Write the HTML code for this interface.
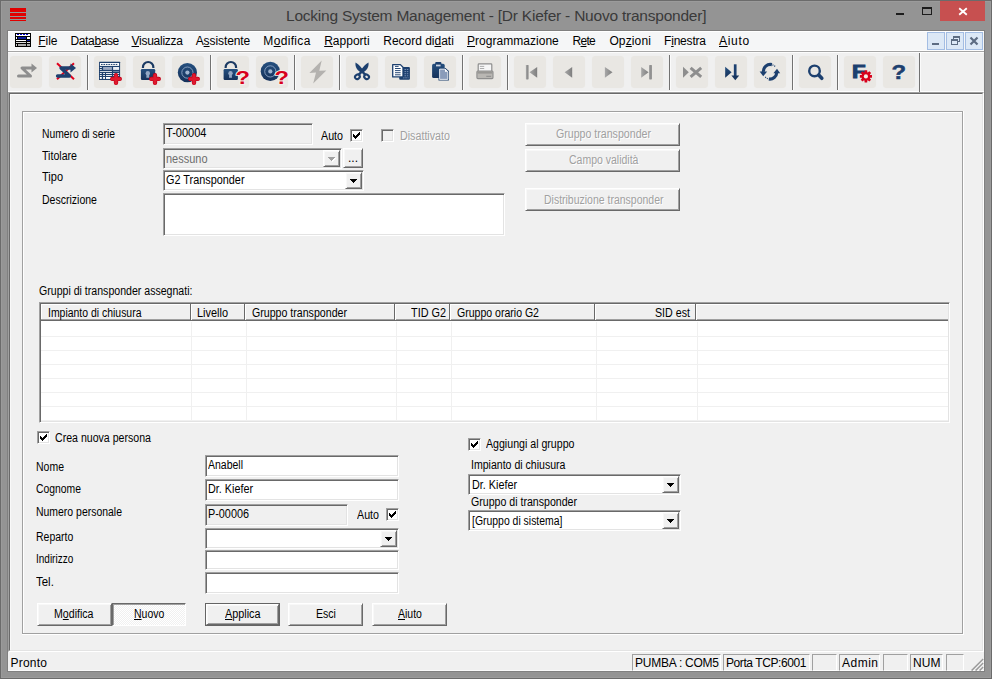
<!DOCTYPE html>
<html><head><meta charset="utf-8"><title>Locking System Management</title>
<style>
html,body{margin:0;padding:0;}
body{width:992px;height:679px;background:#949494;position:relative;overflow:hidden;font-family:"Liberation Sans",sans-serif;}
div,span,svg{position:absolute;box-sizing:border-box;}
.t{white-space:nowrap;color:#000;}
.f{font-size:12px;line-height:14px;height:14px;transform-origin:0 0;}
.g{font-size:12px;line-height:14px;height:14px;transform-origin:0 0;color:#a0a0a0;text-shadow:1px 1px 0 #fff;}
.m{font-size:12px;line-height:15px;height:15px;}
.s{font-size:12px;line-height:15px;height:15px;}
.tt{font-size:15.5px;line-height:19px;height:19px;color:#3a3a3a;}
u{text-decoration:underline;text-underline-offset:1px;text-decoration-thickness:1px;}
.sunk{border:1px solid;border-color:#a0a0a0 #fff #fff #a0a0a0;box-shadow:inset 1px 1px 0 #696969,inset -1px -1px 0 #e3e3e3;background:#fff;}
.dis{background:#f0f0f0;}
.btn{border:1px solid;border-color:#fff #696969 #696969 #fff;box-shadow:inset 1px 1px 0 #f8f8f8,inset -1px -1px 0 #a0a0a0;background:#f0f0f0;}
.cb{width:13px;height:13px;border:1px solid;border-color:#a0a0a0 #fff #fff #a0a0a0;box-shadow:inset 1px 1px 0 #696969,inset -1px -1px 0 #e3e3e3;background:#fff;}
.tb{width:32px;height:32px;top:56px;background:#e9e7e3;border-radius:4px;box-shadow:0 0 1px #e9e7e3;}
.tsep{width:2px;top:55px;height:35px;border-left:1px solid #727272;border-right:1px solid #fbfbfb;}
.hsep{top:304px;height:16px;width:2px;border-left:1px solid #696969;border-right:1px solid #fff;}
.gl{background:#f0f0f0;}
</style></head><body>

<div style="left:0;top:0;width:992px;height:679px;border:1px solid #6b6b6b;box-shadow:inset 0 0 0 1px #9b9b9b;"></div>
<div style="left:7px;top:30px;width:978px;height:642px;border:1px solid #808080;"></div>
<div style="left:10px;top:8px;width:16px;height:4px;background:#e10000;"></div>
<div style="left:10px;top:13px;width:16px;height:3px;background:#e10000;"></div>
<div style="left:10px;top:17px;width:16px;height:2px;background:#e10000;"></div>
<div style="left:10px;top:20px;width:16px;height:1px;background:#e10000;"></div>
<span id="t1" class="t tt" style="left:286px;top:6px;letter-spacing:-0.221px;">Locking System Management - [Dr Kiefer - Nuovo transponder]</span>
<div style="left:896px;top:13px;width:8px;height:2px;background:#1c1c1c;"></div>
<div style="left:922px;top:7px;width:10px;height:8px;border:1px solid #1c1c1c;border-top-width:2px;"></div>
<div style="left:940px;top:1px;width:45px;height:20px;background:#c75050;"></div>
<svg style="left:958px;top:7px" width="10" height="9" viewBox="0 0 10 9"><path d="M1.2 1.2 L8.8 7.8 M8.8 1.2 L1.2 7.8" stroke="#fff" stroke-width="1.8" fill="none"/></svg>
<div style="left:8px;top:31px;width:976px;height:20px;background:#f5f6f7;border-top:1px solid #fff;"></div>
<div style="left:8px;top:50px;width:976px;height:1px;background:#fdfdfd;"></div>
<svg style="left:15px;top:33px" width="16" height="14" viewBox="0 0 16 14" shape-rendering="crispEdges">
<rect x="0" y="0" width="16" height="14" fill="#000"/>
<rect x="1" y="1" width="14" height="2" fill="#fff"/>
<rect x="2" y="1" width="2" height="1" fill="#00c"/><rect x="5" y="1" width="2" height="1" fill="#00c"/><rect x="8" y="1" width="2" height="1" fill="#00c"/><rect x="11" y="1" width="2" height="1" fill="#00c"/>
<rect x="1" y="4" width="1" height="2" fill="#fff"/><rect x="3" y="4" width="8" height="2" fill="#0a1a9a"/><rect x="12" y="4" width="3" height="2" fill="#fff"/>
<rect x="1" y="7" width="10" height="1" fill="#fff"/><rect x="12" y="7" width="3" height="1" fill="#0a1a9a"/>
<rect x="1" y="9" width="10" height="1" fill="#ddd"/><rect x="12" y="9" width="3" height="1" fill="#ddd"/>
<rect x="1" y="11" width="1" height="2" fill="#ccc"/><rect x="3" y="11" width="8" height="2" fill="#aaa"/><rect x="12" y="11" width="3" height="2" fill="#aaa"/>
</svg>
<span id="t2" class="t m" style="left:38.3px;top:34px;letter-spacing:-0.085px;"><u>F</u>ile</span>
<span id="t3" class="t m" style="left:70.5px;top:34px;letter-spacing:-0.371px;">Data<u>b</u>ase</span>
<span id="t4" class="t m" style="left:131.5px;top:34px;letter-spacing:-0.258px;"><u>V</u>isualizza</span>
<span id="t5" class="t m" style="left:195.7px;top:34px;letter-spacing:-0.087px;">A<u>s</u>sistente</span>
<span id="t6" class="t m" style="left:263.3px;top:34px;letter-spacing:0.340px;">M<u>o</u>difica</span>
<span id="t7" class="t m" style="left:324.2px;top:34px;letter-spacing:0.004px;"><u>R</u>apporti</span>
<span id="t8" class="t m" style="left:383.3px;top:34px;letter-spacing:-0.018px;">Record di<u>d</u>ati</span>
<span id="t9" class="t m" style="left:467px;top:34px;letter-spacing:0.031px;"><u>P</u>rogrammazione</span>
<span id="t10" class="t m" style="left:572.6px;top:34px;letter-spacing:-0.723px;">R<u>e</u>te</span>
<span id="t11" class="t m" style="left:609.4px;top:34px;letter-spacing:0.130px;">Op<u>z</u>ioni</span>
<span id="t12" class="t m" style="left:664px;top:34px;letter-spacing:-0.197px;">F<u>i</u>nestra</span>
<span id="t13" class="t m" style="left:719px;top:34px;letter-spacing:0.710px;"><u>A</u>iuto</span>
<div style="left:927px;top:32px;width:18px;height:18px;border:1px solid #a3bde3;background:#dce8f6;"></div>
<div style="left:946px;top:32px;width:18px;height:18px;border:1px solid #a3bde3;background:#dce8f6;"></div>
<div style="left:965px;top:32px;width:18px;height:18px;border:1px solid #a3bde3;background:#dce8f6;"></div>
<div style="left:932px;top:43px;width:7px;height:2px;background:#5d6c82;"></div>
<svg style="left:950px;top:35px" width="11" height="11" viewBox="0 0 11 11" shape-rendering="crispEdges">
<rect x="3" y="1" width="7" height="2" fill="#5d6c82"/><rect x="9" y="1" width="1" height="6" fill="#5d6c82"/><rect x="8" y="6" width="2" height="1" fill="#5d6c82"/><rect x="3" y="1" width="1" height="3" fill="#5d6c82"/>
<rect x="1" y="4" width="7" height="2" fill="#5d6c82"/><rect x="1" y="4" width="1" height="6" fill="#5d6c82"/><rect x="7" y="4" width="1" height="6" fill="#5d6c82"/><rect x="1" y="9" width="7" height="1" fill="#5d6c82"/>
</svg>
<svg style="left:969px;top:36px" width="10" height="10" viewBox="0 0 10 10"><path d="M1.5 1.5 L8.5 8.5 M8.5 1.5 L1.5 8.5" stroke="#5d6c82" stroke-width="2.2" fill="none"/></svg>
<div style="left:8px;top:51px;width:976px;height:41px;background:#f0f0f0;"></div>
<div style="left:8px;top:51px;width:976px;height:1px;background:#a6a6a6;"></div>
<div style="left:8px;top:91px;width:976px;height:1px;background:#fff;"></div>
<div style="left:8px;top:52px;width:976px;height:1px;background:#fcfcfc;"></div>
<svg style="left:0;top:0" width="0" height="0"><defs>
<linearGradient id="gb" x1="0" y1="0" x2="0" y2="1"><stop offset="0" stop-color="#26507f"/><stop offset="1" stop-color="#15315a"/></linearGradient>
<linearGradient id="gg" x1="0" y1="0" x2="1" y2="0"><stop offset="0" stop-color="#a8a8a8"/><stop offset="1" stop-color="#7e7e7e"/></linearGradient>
<linearGradient id="gr" x1="0" y1="0" x2="0" y2="1"><stop offset="0" stop-color="#ee2a3a"/><stop offset="1" stop-color="#b80014"/></linearGradient>
</defs></svg>
<div class="tb" style="left:10px;"></div>
<svg style="left:10px;top:56px" width="32" height="32" viewBox="0 0 32 32"><path d="M8.5 20 H20.5 L12 12 H23" stroke="#8e8e8e" stroke-width="3" fill="none" stroke-linecap="round" stroke-linejoin="round"/><path d="M21.5 7.5 L27 12 L21.5 16.5z" fill="#8e8e8e"/></svg>
<div class="tb" style="left:49px;"></div>
<svg style="left:49px;top:56px" width="32" height="32" viewBox="0 0 32 32"><path d="M8 7.3 L25 23.3 M25 7.3 L8 23.3" stroke="#e0001c" stroke-width="2"/><path d="M8.5 20 H20.5 L12 12 H23" stroke="#1d406f" stroke-width="3.3" fill="none" stroke-linecap="round" stroke-linejoin="round"/><path d="M21.5 7.5 L27 12 L21.5 16.5z" fill="#1d406f"/></svg>
<div class="tb" style="left:94px;"></div>
<svg style="left:94px;top:56px" width="32" height="32" viewBox="0 0 32 32"><rect x="5" y="5.8" width="21.1" height="18.2" rx="0.5" fill="#1d3f6c"/><rect x="5.9" y="7" width="19.2" height="2.9" fill="#fff"/><rect x="5.9" y="11" width="1.9" height="0.9" fill="#fff"/><rect x="5.9" y="13.1" width="1.9" height="0.8" fill="#fff"/><rect x="9.1" y="11" width="8.8" height="2.9" fill="#9aa7c0"/><rect x="19.1" y="11" width="6.0" height="2.9" fill="#e9edf3"/><rect x="5.9" y="15.1" width="12.0" height="0.8" fill="#fff"/><rect x="19.1" y="15.1" width="6.0" height="0.8" fill="#7f93b2"/><rect x="5.9" y="17.1" width="1.9" height="0.9" fill="#fff"/><rect x="9.1" y="17.1" width="1.9" height="0.9" fill="#fff"/><rect x="12" y="17.1" width="5.9" height="0.9" fill="#fff"/><rect x="19.1" y="17.1" width="6.0" height="0.9" fill="#fff"/><rect x="5.9" y="19.1" width="1.9" height="0.9" fill="#fff"/><rect x="9.1" y="19.1" width="1.9" height="0.9" fill="#fff"/><rect x="12" y="19.1" width="5.9" height="0.9" fill="#fff"/><rect x="19.1" y="19.1" width="6.0" height="0.9" fill="#fff"/><rect x="5.9" y="21" width="1.9" height="1.9" fill="#fff"/><rect x="9.1" y="21" width="1.9" height="1.9" fill="#fff"/><rect x="12" y="21" width="5.9" height="1.9" fill="#fff"/><rect x="19.1" y="21" width="6.0" height="1.9" fill="#fff"/><path d="M7 8.45h17" stroke="#1d3f6c" stroke-width="1" stroke-dasharray="1.6 0.85"/><path d="M22 19.2V26.9M18.2 22.95H25.8" stroke="#bd0019" stroke-width="4.3" stroke-linecap="round"/><path d="M22 19.2V26.9M18.2 22.95H25.8" stroke="#e01a2e" stroke-width="3.1" stroke-linecap="round"/></svg>
<div class="tb" style="left:133px;"></div>
<svg style="left:133px;top:56px" width="32" height="32" viewBox="0 0 32 32"><path d="M9.95 12.1 V11.3 A5.2 5.3 0 0 1 20.35 11.3 V12.1" stroke="#1b3a63" stroke-width="2.2" fill="none"/><rect x="7.9" y="13.1" width="14.3" height="10.9" rx="1.2" fill="url(#gb)"/><circle cx="14.8" cy="17.2" r="2.2" fill="#93a7c4"/><path d="M13.6 17.5 h2.4 l0.3 4.2 h-3z" fill="#93a7c4"/><path d="M22 19.2V26.9M18.2 22.95H25.8" stroke="#bd0019" stroke-width="4.3" stroke-linecap="round"/><path d="M22 19.2V26.9M18.2 22.95H25.8" stroke="#e01a2e" stroke-width="3.1" stroke-linecap="round"/></svg>
<div class="tb" style="left:172px;"></div>
<svg style="left:172px;top:56px" width="32" height="32" viewBox="0 0 32 32"><circle cx="15.4" cy="16.6" r="9.6" fill="url(#gb)"/><circle cx="15.4" cy="16.6" r="5.6" fill="none" stroke="#8ea6c6" stroke-width="0.9"/><circle cx="15.4" cy="16.6" r="2.1" fill="#9fb4d0"/><path d="M22 19.2V26.9M18.2 22.95H25.8" stroke="#bd0019" stroke-width="4.3" stroke-linecap="round"/><path d="M22 19.2V26.9M18.2 22.95H25.8" stroke="#e01a2e" stroke-width="3.1" stroke-linecap="round"/></svg>
<div class="tb" style="left:217px;"></div>
<svg style="left:217px;top:56px" width="32" height="32" viewBox="0 0 32 32"><path d="M8.649999999999999 12.1 V11.3 A5.2 5.3 0 0 1 19.05 11.3 V12.1" stroke="#1b3a63" stroke-width="2.2" fill="none"/><rect x="6.6000000000000005" y="13.1" width="14.3" height="10.9" rx="1.2" fill="url(#gb)"/><circle cx="13.5" cy="17.2" r="2.2" fill="#93a7c4"/><path d="M12.299999999999999 17.5 h2.4 l0.3 4.2 h-3z" fill="#93a7c4"/><text transform="translate(18.4,27.7) scale(1.32,1)" font-family="'Liberation Sans',sans-serif" font-weight="bold" font-size="18" fill="#d8001c" stroke="#f3efe9" stroke-width="1.8" paint-order="stroke" stroke-linejoin="round">?</text></svg>
<div class="tb" style="left:256px;"></div>
<svg style="left:256px;top:56px" width="32" height="32" viewBox="0 0 32 32"><circle cx="14.3" cy="15.4" r="9.6" fill="url(#gb)"/><circle cx="14.3" cy="15.4" r="5.6" fill="none" stroke="#8ea6c6" stroke-width="0.9"/><circle cx="14.3" cy="15.4" r="2.1" fill="#9fb4d0"/><text transform="translate(18.4,27.7) scale(1.32,1)" font-family="'Liberation Sans',sans-serif" font-weight="bold" font-size="18" fill="#d8001c" stroke="#f3efe9" stroke-width="1.8" paint-order="stroke" stroke-linejoin="round">?</text></svg>
<div class="tb" style="left:301px;"></div>
<svg style="left:301px;top:56px" width="32" height="32" viewBox="0 0 32 32"><path d="M20.7 4.4 L8.4 17 L15 16.6 L12.2 27.6 L25.3 14.4 L18.3 14.8z" fill="#b4b2af"/></svg>
<div class="tb" style="left:346px;"></div>
<svg style="left:346px;top:56px" width="32" height="32" viewBox="0 0 32 32"><path d="M9.5 6.5 C12.6 8 15.6 11.6 17.3 14.7 L15.1 16.7 C11.4 14.6 8.9 11 9.5 6.5z" fill="#1d406f"/><path d="M22.5 6.5 C19.4 8 16.4 11.6 14.7 14.7 L16.9 16.7 C20.6 14.6 23.1 11 22.5 6.5z" fill="#1d406f"/><path d="M15.6 15 L19.2 18.6 M16.4 15 L12.8 18.6" stroke="#1d406f" stroke-width="2.4"/><ellipse cx="11.4" cy="20.8" rx="2.5" ry="2.1" transform="rotate(-35 11.4 20.8)" fill="none" stroke="#1d406f" stroke-width="2.1"/><ellipse cx="20.6" cy="20.8" rx="2.5" ry="2.1" transform="rotate(35 20.6 20.8)" fill="none" stroke="#1d406f" stroke-width="2.1"/></svg>
<div class="tb" style="left:385px;"></div>
<svg style="left:385px;top:56px" width="32" height="32" viewBox="0 0 32 32"><rect x="14.2" y="11" width="10.7" height="12.7" rx="1" fill="#1d406f"/><path d="M19.5 13.5h4M19.5 15.6h4M19.5 17.7h4M19.5 19.8h4M18 21.8h5.5" stroke="#7f95b8" stroke-width="0.9" stroke-dasharray="1.5 0.8"/><path d="M7.7 8.6 H15.4 L18 11.2 V20.9 H7.7z" fill="#fff" stroke="#1d406f" stroke-width="1.3" stroke-linejoin="round"/><path d="M10 10.4h3.6M10 12.5h5.6M10 14.6h5.6M10 16.7h5.6M10 18.8h5.6" stroke="#1d406f" stroke-width="0.95"/></svg>
<div class="tb" style="left:424px;"></div>
<svg style="left:424px;top:56px" width="32" height="32" viewBox="0 0 32 32"><rect x="8.1" y="7.8" width="12.6" height="14.2" rx="1.6" fill="url(#gb)"/><rect x="11.2" y="5.9" width="6.2" height="4.5" rx="1" fill="#1d406f"/><rect x="12" y="8.6" width="4.6" height="1.8" fill="#c9d3e2"/><path d="M14.5 12 H21.5 L24.9 15 V24.5 H14.5z" fill="#1d406f"/><path d="M15.6 13.1 H21 L23.8 15.6 V23.4 H15.6z" fill="#8a9cba" stroke="#fff" stroke-width="0.8"/><path d="M21 13.1 V15.8 H23.8z" fill="#fff"/></svg>
<div class="tb" style="left:469px;"></div>
<svg style="left:469px;top:56px" width="32" height="32" viewBox="0 0 32 32"><rect x="9.2" y="7.9" width="13.6" height="8" rx="0.8" fill="#f6f6f6" stroke="#8e8e8e" stroke-width="1.2"/><path d="M10.9 10.4h4.3M10.9 12.5h4.3" stroke="#a5a5a5" stroke-width="0.9"/><rect x="7.9" y="15" width="16.1" height="7.6" rx="1" fill="#b9b7b3" stroke="#8e8e8e" stroke-width="1.1"/><rect x="8.4" y="15.4" width="15.1" height="2.2" fill="#989794"/><path d="M17.3 20.3h4.8" stroke="#8a8a8a" stroke-width="1"/></svg>
<div class="tb" style="left:514px;"></div>
<svg style="left:514px;top:56px" width="32" height="32" viewBox="0 0 32 32"><rect x="11.9" y="8.9" width="2.6" height="14.5" rx="0.6" fill="url(#gg)"/><path d="M23.2 11 L15.5 16.35 L23.2 21.7z" fill="url(#gg)"/></svg>
<div class="tb" style="left:553px;"></div>
<svg style="left:553px;top:56px" width="32" height="32" viewBox="0 0 32 32"><path d="M19.2 11 L11.6 16.35 L19.2 21.7z" fill="url(#gg)"/></svg>
<div class="tb" style="left:592px;"></div>
<svg style="left:592px;top:56px" width="32" height="32" viewBox="0 0 32 32"><path d="M12.9 11 L20.5 16.35 L12.9 21.7z" fill="url(#gg)"/></svg>
<div class="tb" style="left:631px;"></div>
<svg style="left:631px;top:56px" width="32" height="32" viewBox="0 0 32 32"><path d="M10.2 11 L17.6 16.35 L10.2 21.7z" fill="url(#gg)"/><rect x="18" y="8.9" width="2.8" height="14.5" rx="0.6" fill="url(#gg)"/></svg>
<div class="tb" style="left:676px;"></div>
<svg style="left:676px;top:56px" width="32" height="32" viewBox="0 0 32 32"><path d="M7 10.8 L12.8 16.3 L7 21.8z" fill="#8e8e8e"/><path d="M14.6 11.8 L25.2 20.8 M25.2 11.8 L14.6 20.8" stroke="#8e8e8e" stroke-width="3"/></svg>
<div class="tb" style="left:715px;"></div>
<svg style="left:715px;top:56px" width="32" height="32" viewBox="0 0 32 32"><path d="M10.2 10.8 L16.6 16.3 L10.2 21.8z" fill="url(#gb)"/><path d="M20.2 8.3 V21" stroke="#1d406f" stroke-width="2.7"/><path d="M16.4 19.6 H24.2 L20.3 24.3z" fill="#16355f"/></svg>
<div class="tb" style="left:754px;"></div>
<svg style="left:754px;top:56px" width="32" height="32" viewBox="0 0 32 32"><path d="M17.9 8.6 A7 7 0 0 0 9.4 16" stroke="#1d406f" stroke-width="3.2" fill="none"/><path d="M5.6 15.6 H13.2 L9.2 20.2z" fill="#1d406f"/><path d="M14.8 23 A7 7 0 0 0 22.8 16.5" stroke="#1d406f" stroke-width="3.2" fill="none"/><path d="M19.4 17.2 H26.2 L23 12.8z" fill="#1d406f"/><path d="M18.5 8.9 A7.2 7.2 0 0 1 21.2 10.6" stroke="#1d406f" stroke-width="1.2" fill="none" stroke-dasharray="1 1"/><path d="M13.8 22.6 A7.2 7.2 0 0 1 11 20.8" stroke="#1d406f" stroke-width="1.2" fill="none" stroke-dasharray="1 1"/></svg>
<div class="tb" style="left:799px;"></div>
<svg style="left:799px;top:56px" width="32" height="32" viewBox="0 0 32 32"><circle cx="15.5" cy="14.9" r="5.3" fill="none" stroke="#1d406f" stroke-width="2.4"/><path d="M19.7 19.1 L22.8 22.3" stroke="#1d406f" stroke-width="3.6" stroke-linecap="round"/></svg>
<div class="tb" style="left:844px;"></div>
<svg style="left:844px;top:56px" width="32" height="32" viewBox="0 0 32 32"><text transform="translate(7.9,22.1) scale(1.22,1)" font-family="'Liberation Sans',sans-serif" font-weight="bold" font-size="18.3" fill="#1d406f" stroke="#1d406f" stroke-width="1">F</text><path d="M27.96 19.11 L27.96 21.69 L26.06 21.83 L25.85 22.34 L27.10 23.77 L25.27 25.60 L23.84 24.35 L23.33 24.56 L23.19 26.46 L20.61 26.46 L20.47 24.56 L19.96 24.35 L18.53 25.60 L16.70 23.77 L17.95 22.34 L17.74 21.83 L15.84 21.69 L15.84 19.11 L17.74 18.97 L17.95 18.46 L16.70 17.03 L18.53 15.20 L19.96 16.45 L20.47 16.24 L20.61 14.34 L23.19 14.34 L23.33 16.24 L23.84 16.45 L25.27 15.20 L27.10 17.03 L25.85 18.46 L26.06 18.97z" fill="#d8001c"/><circle cx="21.9" cy="20.4" r="2.1" fill="#f1eee9"/></svg>
<div class="tb" style="left:883px;"></div>
<svg style="left:883px;top:56px" width="32" height="32" viewBox="0 0 32 32"><text transform="translate(8.6,23) scale(1.22,1)" font-family="'Liberation Sans',sans-serif" font-weight="bold" font-size="19.5" fill="#1d406f" stroke="#1d406f" stroke-width="0.5">?</text></svg>
<div class="tsep" style="left:87px;"></div>
<div class="tsep" style="left:210px;"></div>
<div class="tsep" style="left:294px;"></div>
<div class="tsep" style="left:339px;"></div>
<div class="tsep" style="left:462px;"></div>
<div class="tsep" style="left:507px;"></div>
<div class="tsep" style="left:669px;"></div>
<div class="tsep" style="left:792px;"></div>
<div class="tsep" style="left:837px;"></div>
<div class="tsep" style="left:919px;top:53px;height:39px;"></div>
<div style="left:8px;top:92px;width:976px;height:560px;background:#f0f0f0;border:2px solid;border-color:#a0a0a0 #fff #fff #a0a0a0;box-shadow:inset 0 0 0 0 #000;"></div>
<div style="left:9px;top:93px;width:974px;height:558px;border:1px solid;border-color:#696969 #e3e3e3 #e3e3e3 #696969;"></div>
<div style="left:10px;top:94px;width:972px;height:556px;border-left:1px solid #f9f9f9;border-top:1px solid #f9f9f9;"></div>
<div style="left:22px;top:111px;width:942px;height:524px;border:1px solid #fff;"></div>
<div style="left:22px;top:111px;width:941px;height:523px;border:1px solid #a0a0a0;"></div>
<div style="left:23px;top:112px;width:939px;height:521px;border:1px solid #fff;border-right:none;border-bottom:none;"></div>
<span id="t14" class="t f" style="left:42px;top:127px;transform:scaleX(0.8612);">Numero di serie</span>
<span id="t15" class="t f" style="left:42px;top:149px;transform:scaleX(0.8836);">Titolare</span>
<span id="t16" class="t f" style="left:42px;top:170px;transform:scaleX(0.9172);">Tipo</span>
<span id="t17" class="t f" style="left:42px;top:193px;transform:scaleX(0.8766);">Descrizione</span>
<div class="sunk dis" style="left:163px;top:123px;width:150px;height:22px;"></div>
<span id="t18" class="t f" style="left:166px;top:126px;transform:scaleX(0.9197);">T-00004</span>
<span id="t19" class="t f" style="left:321px;top:129px;transform:scaleX(0.8903);">Auto</span>
<div class="cb" style="left:350px;top:129px;"></div>
<svg style="left:353px;top:132px" width="7" height="7" viewBox="0 0 7 7" shape-rendering="crispEdges"><path d="M0 2h1v1h1v1h1v-1h1v-1h1v-1h1v-1h1v3h-1v1h-1v1h-1v1h-1v1h-1v-1h-1v-1h-1z" fill="#000"/></svg>
<div class="cb dis" style="left:381px;top:129px;background:#f0f0f0;"></div>
<span id="t20" class="t g" style="left:400px;top:129px;transform:scaleX(0.8920);">Disattivato</span>
<div class="sunk dis" style="left:163px;top:148px;width:179px;height:21px;"></div>
<span id="t21" class="t f" style="left:166px;top:152px;transform:scaleX(0.9147);color:#6d6d6d;">nessuno</span>
<div class="btn" style="left:323px;top:150px;width:17px;height:17px;"></div>
<svg style="left:328px;top:157px" width="8" height="5" viewBox="0 0 8 5" shape-rendering="crispEdges"><path transform="translate(1,1)" d="M0 0h7v1h-1v1h-1v1h-1v1h-1v-1h-1v-1h-1v-1h-1z" fill="#fff"/><path d="M0 0h7v1h-1v1h-1v1h-1v1h-1v-1h-1v-1h-1v-1h-1z" fill="#a0a0a0"/></svg>
<div class="btn" style="left:343px;top:148px;width:20px;height:20px;"></div>
<span id="t22" class="t f" style="left:348px;top:151px;transform:scaleX(1.0095);">...</span>
<div class="sunk" style="left:163px;top:170px;width:201px;height:21px;"></div>
<span id="t23" class="t f" style="left:166px;top:173px;transform:scaleX(0.9052);">G2 Transponder</span>
<div class="btn" style="left:345px;top:172px;width:17px;height:17px;"></div>
<svg style="left:350px;top:179px" width="7" height="4" viewBox="0 0 7 4" shape-rendering="crispEdges"><path d="M0 0h7v1h-1v1h-1v1h-1v1h-1v-1h-1v-1h-1v-1h-1z" fill="#000"/></svg>
<div class="sunk" style="left:163px;top:193px;width:342px;height:43px;"></div>
<div class="btn" style="left:525px;top:123px;width:155px;height:23px;"></div>
<span id="t24" class="t g" style="left:555.5px;top:127px;transform:scaleX(0.8842);">Gruppo transponder</span>
<div class="btn" style="left:525px;top:149px;width:155px;height:23px;"></div>
<span id="t25" class="t g" style="left:568.5px;top:153px;transform:scaleX(0.8751);">Campo validità</span>
<div class="btn" style="left:525px;top:188px;width:155px;height:23px;"></div>
<span id="t26" class="t g" style="left:543.5px;top:193px;transform:scaleX(0.8736);">Distribuzione transponder</span>
<span id="t27" class="t f" style="left:38.5px;top:284px;transform:scaleX(0.8815);">Gruppi di transponder assegnati:</span>
<div class="sunk" style="left:39px;top:302px;width:911px;height:121px;"></div>
<div style="left:41px;top:304px;width:907px;height:17px;background:#f0f0f0;border-bottom:1px solid #696969;box-shadow:inset 0 -1px 0 #a0a0a0,inset 1px 1px 0 #fff;"></div>
<div class="hsep" style="left:190px;"></div>
<div class="hsep" style="left:244px;"></div>
<div class="hsep" style="left:394px;"></div>
<div class="hsep" style="left:449px;"></div>
<div class="hsep" style="left:594px;"></div>
<div class="hsep" style="left:695px;"></div>
<div class="gl" style="left:41px;top:336px;width:907px;height:1px;"></div>
<div class="gl" style="left:41px;top:350px;width:907px;height:1px;"></div>
<div class="gl" style="left:41px;top:364px;width:907px;height:1px;"></div>
<div class="gl" style="left:41px;top:378px;width:907px;height:1px;"></div>
<div class="gl" style="left:41px;top:392px;width:907px;height:1px;"></div>
<div class="gl" style="left:41px;top:406px;width:907px;height:1px;"></div>
<div class="gl" style="left:41px;top:420px;width:907px;height:1px;"></div>
<div class="gl" style="left:191px;top:322px;width:1px;height:99px;"></div>
<div class="gl" style="left:246px;top:322px;width:1px;height:99px;"></div>
<div class="gl" style="left:396px;top:322px;width:1px;height:99px;"></div>
<div class="gl" style="left:451px;top:322px;width:1px;height:99px;"></div>
<div class="gl" style="left:596px;top:322px;width:1px;height:99px;"></div>
<div class="gl" style="left:697px;top:322px;width:1px;height:99px;"></div>
<span id="t28" class="t f" style="left:47.5px;top:306px;transform:scaleX(0.8703);">Impianto di chiusura</span>
<span id="t29" class="t f" style="left:197px;top:306px;transform:scaleX(0.9110);">Livello</span>
<span id="t30" class="t f" style="left:251.5px;top:306px;transform:scaleX(0.8842);">Gruppo transponder</span>
<span id="t31" class="t f" style="left:410.5px;top:306px;transform:scaleX(0.9049);">TID G2</span>
<span id="t32" class="t f" style="left:456.5px;top:306px;transform:scaleX(0.8777);">Gruppo orario G2</span>
<span id="t33" class="t f" style="left:655px;top:306px;transform:scaleX(0.8887);">SID est</span>
<div class="cb" style="left:37px;top:431px;"></div>
<svg style="left:40px;top:434px" width="7" height="7" viewBox="0 0 7 7" shape-rendering="crispEdges"><path d="M0 2h1v1h1v1h1v-1h1v-1h1v-1h1v-1h1v3h-1v1h-1v1h-1v1h-1v1h-1v-1h-1v-1h-1z" fill="#000"/></svg>
<span id="t34" class="t f" style="left:55px;top:431px;transform:scaleX(0.8825);">Crea nuova persona</span>
<span id="t35" class="t f" style="left:36px;top:460px;transform:scaleX(0.8733);">Nome</span>
<span id="t36" class="t f" style="left:36px;top:482px;transform:scaleX(0.8639);">Cognome</span>
<span id="t37" class="t f" style="left:36px;top:505px;transform:scaleX(0.8707);">Numero personale</span>
<span id="t38" class="t f" style="left:36px;top:530px;transform:scaleX(0.8725);">Reparto</span>
<span id="t39" class="t f" style="left:36px;top:552px;transform:scaleX(0.8328);">Indirizzo</span>
<span id="t40" class="t f" style="left:36px;top:575px;transform:scaleX(0.9552);">Tel.</span>
<div class="sunk" style="left:205px;top:455px;width:194px;height:22px;"></div>
<span id="t41" class="t f" style="left:208px;top:458px;transform:scaleX(0.8733);">Anabell</span>
<div class="sunk" style="left:205px;top:479px;width:194px;height:22px;"></div>
<span id="t42" class="t f" style="left:208px;top:482px;transform:scaleX(0.8995);">Dr. Kiefer</span>
<div class="sunk dis" style="left:205px;top:504px;width:143px;height:22px;"></div>
<span id="t43" class="t f" style="left:208px;top:507px;transform:scaleX(0.9034);">P-00006</span>
<span id="t44" class="t f" style="left:357px;top:508px;transform:scaleX(0.8903);">Auto</span>
<div class="cb" style="left:386px;top:508px;"></div>
<svg style="left:389px;top:511px" width="7" height="7" viewBox="0 0 7 7" shape-rendering="crispEdges"><path d="M0 2h1v1h1v1h1v-1h1v-1h1v-1h1v-1h1v3h-1v1h-1v1h-1v1h-1v1h-1v-1h-1v-1h-1z" fill="#000"/></svg>
<div class="sunk" style="left:205px;top:528px;width:194px;height:21px;"></div>
<div class="btn" style="left:380px;top:530px;width:17px;height:17px;"></div>
<svg style="left:385px;top:537px" width="7" height="4" viewBox="0 0 7 4" shape-rendering="crispEdges"><path d="M0 0h7v1h-1v1h-1v1h-1v1h-1v-1h-1v-1h-1v-1h-1z" fill="#000"/></svg>
<div class="sunk" style="left:205px;top:550px;width:194px;height:20px;"></div>
<div class="sunk" style="left:205px;top:572px;width:194px;height:22px;"></div>
<div class="cb" style="left:468px;top:438px;"></div>
<svg style="left:471px;top:441px" width="7" height="7" viewBox="0 0 7 7" shape-rendering="crispEdges"><path d="M0 2h1v1h1v1h1v-1h1v-1h1v-1h1v-1h1v3h-1v1h-1v1h-1v1h-1v1h-1v-1h-1v-1h-1z" fill="#000"/></svg>
<span id="t45" class="t f" style="left:486px;top:437px;transform:scaleX(0.8840);">Aggiungi al gruppo</span>
<span id="t46" class="t f" style="left:470.5px;top:458px;transform:scaleX(0.8797);">Impianto di chiusura</span>
<div class="sunk" style="left:468px;top:474px;width:213px;height:21px;"></div>
<span id="t47" class="t f" style="left:472px;top:478px;transform:scaleX(0.8995);">Dr. Kiefer</span>
<div class="btn" style="left:662px;top:476px;width:17px;height:17px;"></div>
<svg style="left:667px;top:483px" width="7" height="4" viewBox="0 0 7 4" shape-rendering="crispEdges"><path d="M0 0h7v1h-1v1h-1v1h-1v1h-1v-1h-1v-1h-1v-1h-1z" fill="#000"/></svg>
<span id="t48" class="t f" style="left:470.5px;top:495px;transform:scaleX(0.8825);">Gruppo di transponder</span>
<div class="sunk" style="left:468px;top:510px;width:213px;height:21px;"></div>
<span id="t49" class="t f" style="left:472px;top:514px;transform:scaleX(0.8694);">[Gruppo di sistema]</span>
<div class="btn" style="left:662px;top:512px;width:17px;height:17px;"></div>
<svg style="left:667px;top:519px" width="7" height="4" viewBox="0 0 7 4" shape-rendering="crispEdges"><path d="M0 0h7v1h-1v1h-1v1h-1v1h-1v-1h-1v-1h-1v-1h-1z" fill="#000"/></svg>
<div class="btn" style="left:37px;top:603px;width:75px;height:23px;"></div>
<span id="t50" class="t f" style="left:54px;top:607px;transform:scaleX(0.8830);">M<u>o</u>difica</span>
<div style="left:112px;top:603px;width:74px;height:23px;border:1px solid;border-color:#696969 #fff #fff #696969;box-shadow:inset 1px 1px 0 #a0a0a0;background-color:#f0f0f0;background-image:linear-gradient(45deg,#fff 25%,transparent 25%,transparent 75%,#fff 75%),linear-gradient(45deg,#fff 25%,transparent 25%,transparent 75%,#fff 75%);background-size:2px 2px;background-position:0 0,1px 1px;"></div>
<span id="t51" class="t f" style="left:133.5px;top:607px;transform:scaleX(0.8719);"><u>N</u>uovo</span>
<div style="left:205px;top:603px;width:75px;height:23px;border:1px solid #646464;"></div>
<div class="btn" style="left:206px;top:604px;width:73px;height:21px;"></div>
<span id="t52" class="t f" style="left:225px;top:607px;transform:scaleX(0.9014);"><u>A</u>pplica</span>
<div class="btn" style="left:288px;top:603px;width:75px;height:23px;"></div>
<span id="t53" class="t f" style="left:315.5px;top:607px;transform:scaleX(0.8808);">Esci</span>
<div class="btn" style="left:372px;top:603px;width:75px;height:23px;"></div>
<span id="t54" class="t f" style="left:397.5px;top:607px;transform:scaleX(0.8754);"><u>A</u>iuto</span>
<div style="left:8px;top:652px;width:976px;height:19px;background:#f0f0f0;border-bottom:1px solid #fafafa;"></div>
<span id="t55" class="t s" style="left:10.5px;top:656px;letter-spacing:0.227px;">Pronto</span>
<div style="left:632px;top:654px;width:89px;height:17px;border:1px solid;border-color:#a0a0a0 #fff #fff #a0a0a0;"></div>
<div style="left:723px;top:654px;width:87px;height:17px;border:1px solid;border-color:#a0a0a0 #fff #fff #a0a0a0;"></div>
<div style="left:812px;top:654px;width:25px;height:17px;border:1px solid;border-color:#a0a0a0 #fff #fff #a0a0a0;"></div>
<div style="left:839px;top:654px;width:41px;height:17px;border:1px solid;border-color:#a0a0a0 #fff #fff #a0a0a0;"></div>
<div style="left:883px;top:654px;width:25px;height:17px;border:1px solid;border-color:#a0a0a0 #fff #fff #a0a0a0;"></div>
<div style="left:910px;top:654px;width:33px;height:17px;border:1px solid;border-color:#a0a0a0 #fff #fff #a0a0a0;"></div>
<div style="left:946px;top:654px;width:18px;height:17px;border:1px solid;border-color:#a0a0a0 #fff #fff #a0a0a0;"></div>
<span id="t56" class="t s" style="left:635px;top:656px;letter-spacing:-0.245px;">PUMBA : COM5</span>
<span id="t57" class="t s" style="left:726px;top:656px;letter-spacing:-0.410px;">Porta TCP:6001</span>
<span id="t58" class="t s" style="left:842px;top:656px;letter-spacing:0.494px;">Admin</span>
<span id="t59" class="t s" style="left:913px;top:656px;letter-spacing:0.084px;">NUM</span>
<svg style="left:971px;top:658px" width="13" height="13" viewBox="0 0 13 13"><path d="M13 1L1 13M13 5L5 13M13 9L9 13" stroke="#fff" stroke-width="1.2"/><path d="M12.2 1L0.6 12.6M12.2 5L4.6 12.6M12.2 9L8.6 12.6" stroke="#9a9a9a" stroke-width="1.5"/></svg>
</body></html>
